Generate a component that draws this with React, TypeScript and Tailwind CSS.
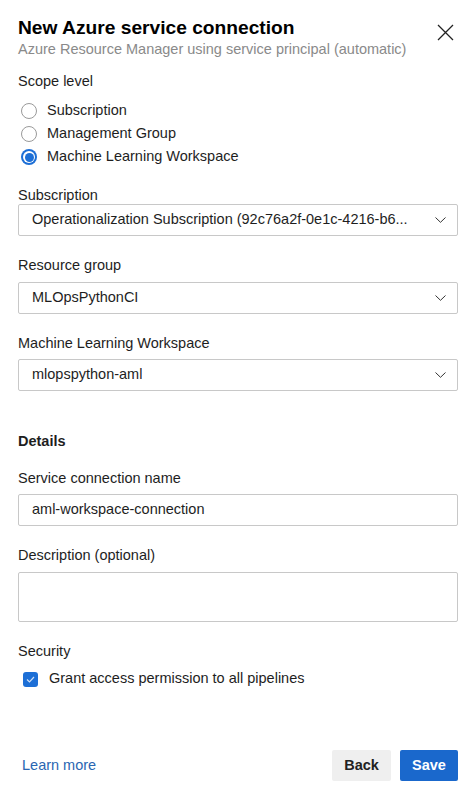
import React, { useState } from 'react';

const Chevron = () => (
    <svg width="11" height="6" viewBox="0 0 11 6" fill="none" className="shrink-0">
        <path d="M0.5 0.5 L5.5 5.3 L10.5 0.5" stroke="#333" strokeWidth="1" />
    </svg>
);

const SelectBox = ({ value }: { value: string }) => (
    <div className="h-[32px] border border-[#c8c8c8] rounded-[2px] flex items-center justify-between pl-[13px] pr-[11px] bg-white">
        <span className="text-[14.5px] text-[#1e1e1e] truncate">{value}</span>
        <Chevron />
    </div>
);

const Label = ({ children, className = '' }: { children: React.ReactNode; className?: string }) => (
    <div className={`text-[14.5px] text-[#1e1e1e] leading-[18px] ${className}`}>{children}</div>
);

export default function App() {
    const [scope, setScope] = useState('Machine Learning Workspace');
    const [grant, setGrant] = useState(true);

    return (
        <div className="w-[475px] h-[793px] bg-white flex flex-col pl-[18px] pr-[17px] font-['Liberation_Sans',Arial,sans-serif] text-[#1e1e1e]">
            {/* Header */}
            <div className="flex items-start justify-between pt-[16px]">
                <div>
                    <h1 className="text-[19.2px] font-bold leading-[24px] text-black">New Azure service connection</h1>
                    <p className="text-[14.5px] leading-[18px] text-[#8a8a8a]">Azure Resource Manager using service principal (automatic)</p>
                </div>
                <button className="mt-[8px] mr-[4px]">
                    <svg width="17" height="17" viewBox="0 0 17 17">
                        <path d="M1 1 L16 16 M16 1 L1 16" stroke="#222" strokeWidth="1.3" />
                    </svg>
                </button>
            </div>

            {/* Scope level */}
            <Label className="mt-[14px]">Scope level</Label>
            <div className="mt-[12px] flex flex-col gap-[5px]">
                {['Subscription', 'Management Group', 'Machine Learning Workspace'].map(s => (
                    <label key={s} className="flex items-center h-[18px] cursor-pointer" onClick={() => setScope(s)}>
                        {scope === s ? (
                            <span className="ml-[3px] w-[16px] h-[16px] rounded-full bg-[#1d6fd6] flex items-center justify-center">
                                <span className="w-[12px] h-[12px] rounded-full bg-white flex items-center justify-center">
                                    <span className="w-[9px] h-[9px] rounded-full bg-[#1d6fd6]" />
                                </span>
                            </span>
                        ) : (
                            <span className="ml-[3px] w-[16px] h-[16px] rounded-full border border-[#9a9a9a] bg-white" />
                        )}
                        <span className="ml-[10px] text-[14.5px]">{s}</span>
                    </label>
                ))}
            </div>

            {/* Selects */}
            <Label className="mt-[20px]">Subscription</Label>
            <SelectBox value="Operationalization Subscription (92c76a2f-0e1c-4216-b6..." />

            <Label className="mt-[20px] mb-[8px]">Resource group</Label>
            <SelectBox value="MLOpsPythonCI" />

            <Label className="mt-[20px] mb-[7px]">Machine Learning Workspace</Label>
            <SelectBox value="mlopspython-aml" />

            {/* Details */}
            <div className="mt-[41px] text-[14.5px] font-bold leading-[18px]">Details</div>

            <Label className="mt-[19px] mb-[7px]">Service connection name</Label>
            <div className="h-[32px] border border-[#c8c8c8] rounded-[2px] flex items-center pl-[13px] text-[14.5px]">
                aml-workspace-connection
            </div>

            <Label className="mt-[20px] mb-[8px]">Description (optional)</Label>
            <div className="h-[50px] border border-[#c8c8c8] rounded-[2px]" />

            {/* Security */}
            <Label className="mt-[20px]">Security</Label>
            <label className="mt-[10px] h-[18px] flex items-center cursor-pointer" onClick={() => setGrant(g => !g)}>
                <span className={`ml-[5px] w-[15px] h-[15px] rounded-[3px] flex items-center justify-center ${grant ? 'bg-[#1d6fd6]' : 'border border-[#9a9a9a]'}`}>
                    {grant && (
                        <svg width="9" height="7" viewBox="0 0 9 7" fill="none">
                            <path d="M1 3.5 L3.5 6 L8 1" stroke="#cfe0f7" strokeWidth="1.2" />
                        </svg>
                    )}
                </span>
                <span className="ml-[11px] text-[14.5px]">Grant access permission to all pipelines</span>
            </label>

            {/* Footer */}
            <div className="mt-auto mb-[12px] flex items-center justify-between">
                <a className="ml-[4px] text-[14.5px] text-[#2a66b2]">Learn more</a>
                <div className="flex gap-[9px]">
                    <button className="w-[59px] h-[31px] rounded-[2px] bg-[#efefef] text-[14.5px] font-bold text-[#222]">Back</button>
                    <button className="w-[58px] h-[31px] rounded-[2px] bg-[#1a68cc] text-[14.5px] font-bold text-white">Save</button>
                </div>
            </div>
        </div>
    );
}
